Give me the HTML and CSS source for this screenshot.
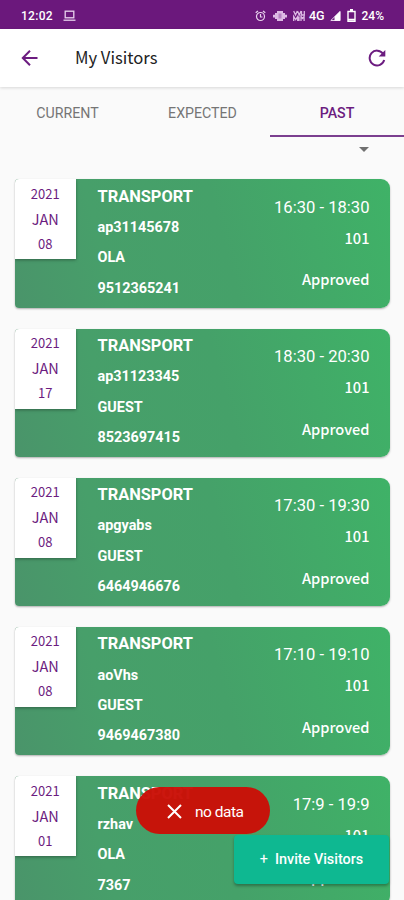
FILE: index.html
```html
<!DOCTYPE html>
<html lang="en">
<head>
    <meta charset="UTF-8">
    <meta name="viewport" content="width=device-width, initial-scale=1.0">
    <title>My Visitors</title>
    <link rel="stylesheet" href="styles.css">
</head>
<body>

    <div class="status-bar">
        <span class="clock">12:02</span>
        <svg class="laptop" width="13" height="12" viewBox="0 0 13 12" fill="none" stroke="#e9d3ee" stroke-width="1.3">
            <rect x="2.2" y="1.2" width="8.6" height="6.6"/>
            <path d="M0.5 10.2h12"/>
        </svg>
        <div class="status-icons">
            <svg width="11" height="12" viewBox="0 0 11 12" fill="none" stroke="#e9d3ee" stroke-width="1.2">
                <circle cx="5.5" cy="6.5" r="4"/>
                <path d="M5.5 4v3h2M0.7 2.8L3 1M10.3 2.8L8 1"/>
            </svg>
            <svg class="vibrate" width="14" height="12" viewBox="0 0 14 12" fill="#dcb9e4">
                <path d="M4 1h6v10H4zM2 3h2v6H2zM0 4.8h2v2.6H0zM10 3h2v6h-2zM12 4.8h2v2.6h-2z"/>
                <path d="M5.5 3.5h3v5h-3z" fill="#b57fc2"/>
            </svg>
            <svg class="volte" width="12" height="12" viewBox="0 0 12 12" fill="none" stroke="#dcb9e4" stroke-width="1.3">
                <path d="M0.7 1l1.8 4 1.8-4M4.5 1l1.8 4L8 1M8.5 1v4h2.8V1M0.7 11V6.5l2 3 2-3V11M6 6.5V11M8 11V6.5l1.5 2 1.6-2V11"/>
            </svg>
            <span class="network">4G</span>
            <svg class="signal" width="11" height="12" viewBox="0 0 11 12">
                <path d="M0.8 10.5L10 1.5v9z" fill="none" stroke="#e9d3ee"/>
                <path d="M4.5 10.8V6.8L10.3 1v9.8z" fill="#fff"/>
            </svg>
            <svg class="battery" width="9" height="13" viewBox="0 0 9 13" fill="none" stroke="#fff" stroke-width="1.4">
                <path d="M1 2.5h7v9.7H1z"/>
                <path d="M3 1h3M1 10.6h7" stroke-width="1.8"/>
            </svg>
            <span class="percent">24%</span>
        </div>
    </div>

    <header class="app-bar">
        <svg class="back" width="18" height="18" viewBox="0 0 18 18" fill="none" stroke="#6c1c80" stroke-width="2">
            <path d="M16.5 9H2.5M9 1.8L1.8 9L9 16.2"/>
        </svg>
        <h1>My Visitors</h1>
        <svg class="refresh" width="18" height="18" viewBox="0 0 18 18">
            <path d="M15 4.6A7.4 7.4 0 1 0 16.2 11" fill="none" stroke="#6c1c80" stroke-width="2"/>
            <path d="M17.3 1v6.6h-6.6z" fill="#6c1c80"/>
        </svg>
    </header>

    <nav class="tabs">
        <a class="tab">CURRENT</a>
        <a class="tab">EXPECTED</a>
        <a class="tab active">PAST</a>
    </nav>
    <div class="filter"><span class="caret"></span></div>

    <main class="visitors">
        <div class="card">
            <div class="date"><span>2021</span><span class="month">JAN</span><span>08</span></div>
            <div class="details">
                <h2>TRANSPORT</h2>
                <p>ap31145678</p>
                <p>OLA</p>
                <p>9512365241</p>
            </div>
            <div class="info">
                <span class="time">16:30 - 18:30</span>
                <span class="flat">101</span>
                <span class="state">Approved</span>
            </div>
        </div>
        <div class="card">
            <div class="date"><span>2021</span><span class="month">JAN</span><span>17</span></div>
            <div class="details">
                <h2>TRANSPORT</h2>
                <p>ap31123345</p>
                <p>GUEST</p>
                <p>8523697415</p>
            </div>
            <div class="info">
                <span class="time">18:30 - 20:30</span>
                <span class="flat">101</span>
                <span class="state">Approved</span>
            </div>
        </div>
        <div class="card">
            <div class="date"><span>2021</span><span class="month">JAN</span><span>08</span></div>
            <div class="details">
                <h2>TRANSPORT</h2>
                <p>apgyabs</p>
                <p>GUEST</p>
                <p>6464946676</p>
            </div>
            <div class="info">
                <span class="time">17:30 - 19:30</span>
                <span class="flat">101</span>
                <span class="state">Approved</span>
            </div>
        </div>
        <div class="card">
            <div class="date"><span>2021</span><span class="month">JAN</span><span>08</span></div>
            <div class="details">
                <h2>TRANSPORT</h2>
                <p>aoVhs</p>
                <p>GUEST</p>
                <p>9469467380</p>
            </div>
            <div class="info">
                <span class="time">17:10 - 19:10</span>
                <span class="flat">101</span>
                <span class="state">Approved</span>
            </div>
        </div>
        <div class="card">
            <div class="date"><span>2021</span><span class="month">JAN</span><span>01</span></div>
            <div class="details">
                <h2>TRANSPORT</h2>
                <p>rzhav</p>
                <p>OLA</p>
                <p>7367</p>
            </div>
            <div class="info">
                <span class="time">17:9 - 19:9</span>
                <span class="flat">101</span>
                <span class="state">Approved</span>
            </div>
        </div>
    </main>

    <div class="toast">
        <svg width="15" height="15" viewBox="0 0 15 15" fill="none" stroke="#fff" stroke-width="2">
            <path d="M1 1l13 13M14 1L1 14"/>
        </svg>
        <span>no data</span>
    </div>
    <button class="invite" type="button"><span class="plus">+</span>Invite Visitors</button>

</body>
</html>
```
FILE: styles.css
```css
* {
    box-sizing: border-box;
}
body {
    position: relative;
    height: 900px;
    margin: 0;
    overflow: hidden;
    background-color: #fafafa;
    font-family: Roboto, sans-serif;
}
h1, h2, p {
    margin: 0;
}
.status-bar {
    display: flex;
    align-items: center;
    height: 29px;
    padding: 2px 20px 0 21px;
    background-color: #6b187c;
    color: #fff;
    font-size: 12px;
    font-weight: 500;
}
.clock {
    width: 33px;
    letter-spacing: 0.3px;
}
.laptop {
    margin-left: 9px;
}
.status-icons {
    display: flex;
    align-items: center;
    margin-left: auto;
}
.vibrate {
    margin-left: 7px;
}
.volte {
    margin-left: 6px;
}
.network {
    margin-left: 4px;
    font-size: 12.5px;
}
.signal {
    margin-left: 5px;
}
.battery {
    margin-left: 6px;
}
.percent {
    margin-left: 6px;
    font-size: 12px;
}
.app-bar {
    display: flex;
    align-items: center;
    height: 58px;
    padding: 0 18px 0 21px;
    background-color: #fff;
    box-shadow: 0 1px 3px rgba(0, 0, 0, 0.14);
}
.app-bar h1 {
    margin-left: 36px;
    padding-bottom: 2px;
    color: #222;
    font-family: "Noto Sans CJK JP", sans-serif;
    font-size: 16.6px;
    font-weight: 400;
}
.refresh {
    margin-left: auto;
}
.tabs {
    display: flex;
    height: 50px;
}
.tab {
    width: 135px;
    border-bottom: 2px solid transparent;
    color: #757575;
    font-size: 14.2px;
    line-height: 52px;
    text-align: center;
}
.tab.active {
    width: 134px;
    border-color: #7b3f8f;
    color: #6c1c80;
    font-weight: 500;
}
.filter {
    display: flex;
    justify-content: flex-end;
    height: 42.4px;
    padding: 10px 35px 0 0;
}
.caret {
    width: 0;
    height: 0;
    border: 5px solid transparent;
    border-top-color: #707070;
    border-bottom: 0;
}
.visitors {
    display: flex;
    flex-direction: column;
    gap: 20.8px;
    padding: 0 14px 0 14.5px;
}
.card {
    display: flex;
    flex-shrink: 0;
    height: 128.4px;
    overflow: hidden;
    border-radius: 4px 9px 9px 4px;
    background: linear-gradient(75deg, #4a946a 0%, #479f6a 25%, #45a169 55%, #3fb267 100%);
    box-shadow: 0 1px 2px rgba(0, 0, 0, 0.3);
    color: #fff;
}
.date {
    display: flex;
    flex-direction: column;
    width: 61.5px;
    height: 80px;
    padding-top: 1.5px;
    background-color: #fff;
    box-shadow: 0 1px 3px rgba(0, 0, 0, 0.35);
    color: #6c1c80;
    font-family: "Noto Sans CJK JP", sans-serif;
    font-size: 13px;
    line-height: 25px;
    text-align: center;
}
.month {
    font-size: 14.5px;
}
.details {
    padding: 2.4px 0 0 21.5px;
    font-size: 14.4px;
    font-weight: 700;
    line-height: 30.4px;
}
.details h2 {
    height: 31.2px;
    font-size: 16.4px;
    line-height: 30.4px;
}
.info {
    display: flex;
    flex-direction: column;
    margin-left: auto;
    padding: 12.4px 20.5px 0 0;
    text-align: right;
}
.time {
    font-size: 16.6px;
    line-height: 31px;
}
.flat, .state {
    font-family: "Noto Sans CJK JP", sans-serif;
    font-size: 14.6px;
    font-weight: 500;
    line-height: 30px;
}
.state {
    margin-top: 11.6px;
}
/* floating over the list */
.toast {
    position: absolute;
    top: 787px;
    left: 136px;
    display: flex;
    align-items: center;
    width: 134px;
    height: 47px;
    padding: 2px 0 0 31px;
    border-radius: 24px;
    background-color: rgba(202, 15, 7, 0.97);
    color: #fff;
    font-size: 15.5px;
}
.toast span {
    margin-left: 13px;
    letter-spacing: -0.5px;
}
.invite {
    position: absolute;
    top: 835px;
    left: 234px;
    width: 155px;
    height: 49px;
    padding: 0;
    border: 0;
    border-radius: 4px;
    background-color: #0eb891;
    box-shadow: 0 2px 3px rgba(0, 0, 0, 0.3);
    color: #fff;
    font-family: Roboto, sans-serif;
    font-size: 14.4px;
    font-weight: 500;
}
.plus {
    margin-right: 7px;
    font-weight: 400;
}
```
